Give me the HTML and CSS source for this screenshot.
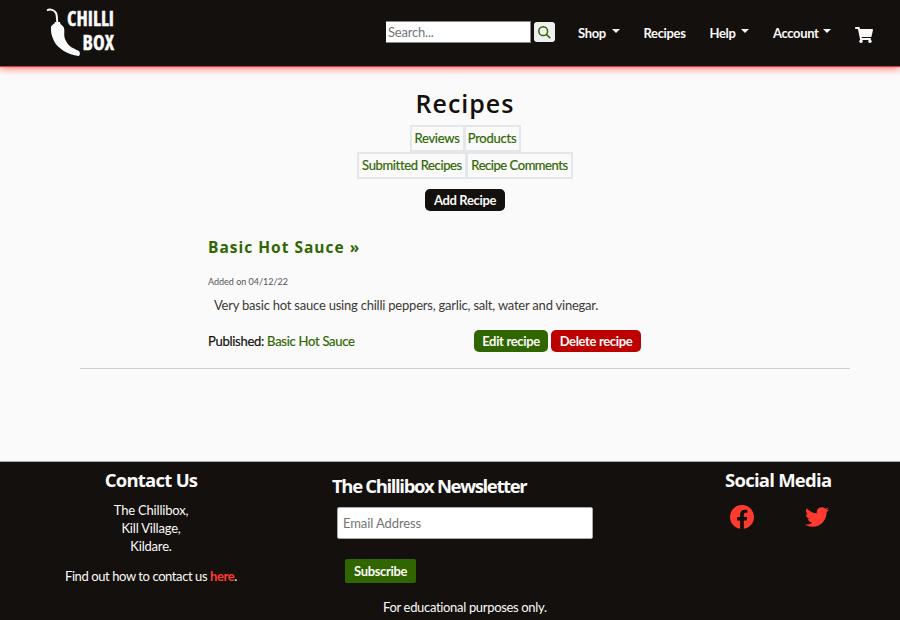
FILE: index.html
```html
<!DOCTYPE html>
<html lang="en">
<head>
<meta charset="utf-8">
<title>Chilli Box - Recipes</title>
<link rel="stylesheet" href="styles.css">
</head>
<body>
<header class="header">
  <a class="logo">
    <svg width="80" height="60" viewBox="0 0 80 60">
      <path d="M1 5.500 C4 3.500 8.500 5 10 8 C11.500 11 10.500 14 11.500 18" fill="none" stroke="#fafafa" stroke-width="2"/>
      <path d="M5 22 C6 19 8 20 9 17 L14 17 C14 20 17 20 18 23 C19 27 17 31 20 36 C23 42 27 43 33 46 C34.500 47.500 34 51 32.500 51 C22 49.500 12 44 8 36 C5.500 31 4.500 26 5 22Z" fill="#fafafa"/>
      <text class="logo-text" x="21" y="21" textLength="47" lengthAdjust="spacingAndGlyphs">CHILLI</text>
      <text class="logo-text" x="36.500" y="45" textLength="31.500" lengthAdjust="spacingAndGlyphs">BOX</text>
    </svg>
  </a>
  <form class="search">
    <input class="search-input" type="text" placeholder="Search...">
    <button class="search-button" type="button" aria-label="Search">
      <svg width="13" height="13" viewBox="0 0 13 13" fill="none" stroke="#306600" stroke-width="1.500"><circle cx="5.200" cy="5.200" r="4.400"/><path d="M8.400 8.400 L12.300 12.300"/></svg>
    </button>
  </form>
  <nav class="nav">
    <a class="nav-item shop"><span>Shop</span><i class="caret"></i></a>
    <a class="nav-item recipes"><span>Recipes</span></a>
    <a class="nav-item help"><span>Help</span><i class="caret"></i></a>
    <a class="nav-item account"><span>Account</span><i class="caret"></i></a>
    <a class="cart" aria-label="Cart"><svg width="18" height="16" viewBox="0 0 576 512" fill="#fafafa"><path d="M528.12 301.319l47.273-208C578.806 78.301 567.391 64 551.990 64H159.208l-9.166-44.810C147.758 8.021 137.930 0 126.529 0H24C10.745 0 0 10.745 0 24v16c0 13.255 10.745 24 24 24h69.883l70.248 343.435C147.325 417.100 136 435.222 136 456c0 30.928 25.072 56 56 56s56-25.072 56-56c0-15.674-6.447-29.835-16.824-40h209.647C430.447 426.165 424 440.326 424 456c0 30.928 25.072 56 56 56s56-25.072 56-56c0-22.172-12.888-41.332-31.579-50.405l5.517-24.276c3.413-15.018-8.002-29.319-23.403-29.319H218.117l-6.545-32h293.145c11.206 0 20.920-7.754 23.403-18.681z"/></svg></a>
  </nav>
</header>
<main class="main">
  <h1 class="title">Recipes</h1>
  <div class="tabs"><a class="tab reviews">Reviews</a><a class="tab products">Products</a></div>
  <div class="tabs"><a class="tab submitted">Submitted Recipes</a><a class="tab comments">Recipe Comments</a></div>
  <a class="button add">Add Recipe</a>
  <article class="recipe">
    <h2 class="recipe-title">Basic Hot Sauce »</h2>
    <p class="date">Added on 04/12/22</p>
    <p class="description">Very basic hot sauce using chilli peppers, garlic, salt, water and vinegar.</p>
    <div class="recipe-row">
      <p class="published">Published: <a>Basic Hot Sauce</a></p>
      <div class="actions"><a class="button edit">Edit recipe</a><a class="button delete">Delete recipe</a></div>
    </div>
  </article>
</main>
<footer class="footer">
  <section class="contact">
    <h3 class="footer-title contact-title">Contact Us</h3>
    <p class="address">The Chillibox,<br>Kill Village,<br>Kildare.</p>
    <p class="find">Find out how to contact us <a class="here">here</a>.</p>
  </section>
  <section class="newsletter">
    <h3 class="footer-title newsletter-title">The Chillibox Newsletter</h3>
    <input class="email" type="email" placeholder="Email Address">
    <button class="subscribe" type="button">Subscribe</button>
    <p class="note">For educational purposes only.</p>
  </section>
  <section class="social">
    <h3 class="footer-title social-title">Social Media</h3>
    <div class="social-icons">
      <svg width="24" height="24" viewBox="8 8 496 496"><path d="M504 256C504 119 393 8 256 8S8 119 8 256c0 123.780 90.690 226.380 209.250 245V327.690h-63V256h63v-54.640c0-62.150 37-96.480 93.670-96.480 27.140 0 55.520 4.840 55.520 4.840v61h-31.280c-30.800 0-40.410 19.120-40.410 38.730V256h68.780l-11 71.690h-57.780V501C413.310 482.380 504 379.780 504 256z"/></svg>
      <svg width="24" height="24" viewBox="0 0 512 512"><path d="M459.370 151.716c.325 4.548.325 9.097.325 13.645 0 138.720-105.583 298.558-298.558 298.558-59.452 0-114.680-17.219-161.137-47.106 8.447.974 16.568 1.299 25.340 1.299 49.055 0 94.213-16.568 130.274-44.832-46.132-.975-84.792-31.188-98.112-72.772 6.498.974 12.995 1.624 19.818 1.624 9.421 0 18.843-1.300 27.614-3.573-48.081-9.747-84.143-51.980-84.143-102.985v-1.299c13.969 7.797 30.214 12.670 47.431 13.319-28.264-18.843-46.781-51.005-46.781-87.391 0-19.492 5.197-37.360 14.294-52.954 51.655 63.675 129.300 105.258 216.365 109.807-1.624-7.797-2.599-15.918-2.599-24.040 0-57.828 46.782-104.934 104.934-104.934 30.213 0 57.502 12.670 76.670 33.137 23.715-4.548 46.456-13.320 66.599-25.340-7.798 24.366-24.366 44.833-46.132 57.827 21.117-2.273 41.584-8.122 60.426-16.243-14.292 20.791-32.161 39.308-52.628 54.253z"/></svg>
    </div>
  </section>
</footer>
</body>
</html>
```
FILE: styles.css
```css
* { box-sizing: border-box; }
body { margin: 0; height: 620px; overflow: hidden; display: flex; flex-direction: column; background: #fafafa; color: #14100d; font: 13px/18px Lato, "Open Sans", sans-serif; font-variant-ligatures: none; }
h1, h2, h3, p { margin: 0; }
a { white-space: nowrap; }
input, button { font: inherit; border: 0; padding: 0; }
.header { height: 66px; flex: none; display: flex; background: #14100d; box-shadow: 0 1px 1px #c94040, 0 2px 8px #ff3b2fcc; }
.logo { width: 340px; margin-left: 46px; padding-top: 5px; }
.logo svg { display: block; overflow: visible; }
.logo-text { font: bold 22px "Open Sans", sans-serif; font-stretch: 75%; fill: #fafafa; stroke: #fafafa; stroke-width: .4px; }
.search { display: flex; align-items: flex-start; gap: 3px; padding-top: 21px; }
.search-input { width: 145px; height: 22px; padding: 1px 2px; background: #fff; border: 1px solid #888; border-left: 0; letter-spacing: -.2px; }
.search-input::placeholder, .email::placeholder { color: #757575; opacity: 1; }
.search-button { width: 21px; height: 20px; margin-top: 1px; display: flex; align-items: center; justify-content: center; background: #efefef; border-radius: 3px; }
.nav { display: flex; margin-left: 23px; padding-top: 24px; color: #fafafa; font-weight: bold; }
.nav-item { display: flex; letter-spacing: -.35px; }
.shop { width: 65.500px; }
.recipes { width: 66px; }
.help { width: 63.500px; }
.account { width: 82px; }
.caret { width: 0; height: 0; margin: 5px 0 0 6px; border: 4px solid transparent; border-top-color: #fafafa; border-bottom: 0; }
.account .caret { margin-left: 4px; }
.cart { padding-top: 3px; }
.main { height: 395px; flex: none; display: flex; flex-direction: column; align-items: center; padding: 21px 50px 0 80px; }
.title { height: 38px; font: 600 25px/32px "Open Sans", sans-serif; letter-spacing: 1px; }
.tabs { height: 27px; display: flex; }
.tab { height: 27px; border: 2px solid #e3e7e9; padding-top: 2px; text-align: center; color: #306600; letter-spacing: -.25px; -webkit-text-stroke: .2px #306600; }
.reviews { width: 55px; }
.products { width: 57px; }
.submitted { width: 110px; letter-spacing: -.35px; }
.comments { width: 107px; letter-spacing: -.45px; }
.tabs .products, .tabs .comments { margin-left: -1px; }
.button { height: 22px; display: block; border-radius: 5px; color: #fafafa; font-weight: bold; line-height: 22px; text-align: center; letter-spacing: -.35px; }
.add { width: 80px; margin-top: 10px; background: #14100d; }
.recipe { width: 770px; height: 158px; padding: 24px 209px 0 128px; border-bottom: 1px solid #d0d0d0; }
.recipe-title { color: #306600; font: 700 15.500px/24px "Open Sans", sans-serif; letter-spacing: 1px; }
.date { margin-top: 15px; font-size: 9px; line-height: 16px; color: #555; }
.description { margin: 6px 0 0 6px; white-space: nowrap; color: #3c3937; letter-spacing: -.22px; }
.recipe-row { display: flex; justify-content: space-between; margin-top: 16px; }
.published { padding-top: 2px; letter-spacing: -.27px; -webkit-text-stroke: .2px; }
.published a { color: #306600; }
.actions { display: flex; gap: 3px; }
.edit { width: 74px; background: #306600; }
.delete { width: 90px; background: #bd0000; }
.footer { height: 159px; flex: none; display: flex; background: #14100d; border-top: 1px solid #aaa; color: #fafafa; }
.footer-title { font: 700 18.500px/22px "Open Sans", sans-serif; height: 24px; letter-spacing: -.75px; white-space: nowrap; }
.newsletter-title { letter-spacing: -1.350px; }
.contact { width: 302px; padding-top: 7px; text-align: center; }
.address { margin-top: 8px; letter-spacing: -.2px; }
.find { margin-top: 12px; letter-spacing: -.41px; }
.here { color: #ff3b2f; font-weight: bold; }
.newsletter { width: 326px; padding: 13px 0 0 30px; }
.email { display: block; width: 256px; height: 32px; margin: 8px 0 0 5px; padding: 0 5px; border: 1px solid #aaa; border-radius: 2px; background: #fff; letter-spacing: -.1px; }
.subscribe { display: block; width: 71px; height: 24px; margin: 20px 0 0 13px; border-radius: 2px; color: #fafafa; background: #306600; font-weight: bold; letter-spacing: -.35px; }
.note { margin: 15px 0 0 51px; letter-spacing: -.33px; }
.social { width: 272px; padding: 7px 0 0 97px; }
.social-icons { display: flex; gap: 51px; margin: 12px 0 0 5px; fill: #ff3b2f; }
```
